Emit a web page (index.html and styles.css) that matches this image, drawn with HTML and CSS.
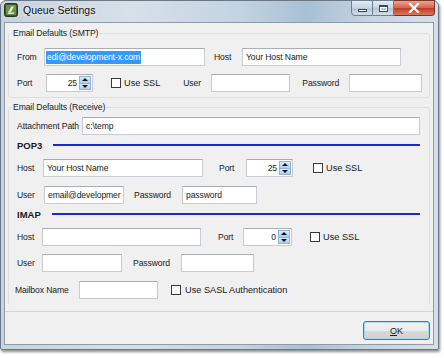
FILE: index.html
```html
<!DOCTYPE html>
<html>
<head>
<meta charset="utf-8">
<link rel="stylesheet" href="styles.css">
</head>
<body>
<div class="window">
  <div class="titlebar">
    <svg class="appicon" width="14" height="14" viewBox="0 0 14 14">
      <rect x="0.5" y="0.5" width="13" height="13" rx="2" fill="#3f5a2c" stroke="#24351a"/>
      <rect x="2" y="2" width="10" height="10" rx="1" fill="#6f8f4a"/>
      <path d="M4 9.5 L7.5 3.5 L10 3.5 L6.5 9.5 Z" fill="#e8f0d8"/>
      <rect x="4" y="9.5" width="6" height="1.3" fill="#e8f0d8"/>
    </svg>
    <span class="title">Queue Settings</span>
    <div class="caption-btns">
      <div class="cbtn min"><span class="minbar"></span></div>
      <div class="cbtn max"><span class="maxbox"></span></div>
      <div class="cbtn close">
        <svg width="12" height="10" viewBox="0 0 12 10"><path d="M2 1 L10 9 M10 1 L2 9" stroke="#fff" stroke-width="2.2" stroke-linecap="square"/></svg>
      </div>
    </div>
  </div>
  <div class="client">
    <fieldset class="group smtp">
      <legend>Email Defaults (SMTP)</legend>
      <div class="row r-from">
        <span class="lbl l-from">From</span>
        <div class="tb w-from"><span class="sel">edi@development-x.com</span></div>
        <span class="lbl l-host">Host</span>
        <div class="tb w-host">Your Host Name</div>
      </div>
      <div class="row r-port">
        <span class="lbl l-port">Port</span>
        <div class="tb spin w-spin"><span class="num">25</span><span class="spinbtns"><span class="up"></span><span class="dn"></span></span></div>
        <span class="chk c-ssl1"><span class="box"></span>Use SSL</span>
        <span class="lbl l-user1">User</span>
        <div class="tb w-user1"></div>
        <span class="lbl l-pw1">Password</span>
        <div class="tb w-pw1"></div>
      </div>
    </fieldset>
    <fieldset class="group recv">
      <legend>Email Defaults (Receive)</legend>
      <div class="row r-att">
        <span class="lbl l-att">Attachment Path</span>
        <div class="tb w-att">c:\temp</div>
      </div>
      <div class="head h-pop">
        <span class="htxt">POP3</span><span class="hline"></span>
      </div>
      <div class="row r-phost">
        <span class="lbl l-phost">Host</span>
        <div class="tb w-phost">Your Host Name</div>
        <span class="lbl l-pport">Port</span>
        <div class="tb spin w-spin"><span class="num">25</span><span class="spinbtns"><span class="up"></span><span class="dn"></span></span></div>
        <span class="chk c-ssl2"><span class="box"></span>Use SSL</span>
      </div>
      <div class="row r-puser">
        <span class="lbl l-puser">User</span>
        <div class="tb w-puser">email@developmer</div>
        <span class="lbl l-ppw">Password</span>
        <div class="tb w-ppw">password</div>
      </div>
      <div class="head h-imap">
        <span class="htxt">IMAP</span><span class="hline"></span>
      </div>
      <div class="row r-ihost">
        <span class="lbl l-ihost">Host</span>
        <div class="tb w-ihost"></div>
        <span class="lbl l-iport">Port</span>
        <div class="tb spin w-spin2"><span class="num">0</span><span class="spinbtns"><span class="up"></span><span class="dn"></span></span></div>
        <span class="chk c-ssl3"><span class="box"></span>Use SSL</span>
      </div>
      <div class="row r-iuser">
        <span class="lbl l-iuser">User</span>
        <div class="tb w-iuser"></div>
        <span class="lbl l-ipw">Password</span>
        <div class="tb w-ipw"></div>
      </div>
      <div class="row r-mbox">
        <span class="lbl l-mbox">Mailbox Name</span>
        <div class="tb w-mbox"></div>
        <span class="chk c-sasl"><span class="box"></span>Use SASL Authentication</span>
      </div>
    </fieldset>
    <div class="footer">
      <button class="ok"><u>O</u>K</button>
    </div>
  </div>
</div>
</body>
</html>
```
FILE: styles.css
```css
* { box-sizing: border-box; }
html, body { margin: 0; padding: 0; background: #ffffff; }
body {
  font-family: "Liberation Sans", Arial, sans-serif;
  font-size: 8.6px;
  letter-spacing: -0.1px;
  color: #1a1a1a;
  width: 444px;
  height: 358px;
  overflow: hidden;
}
.window {
  width: 439px;
  height: 350px;
  border: 1px solid #6b7886;
  border-radius: 6px 6px 2px 2px;
  background: linear-gradient(to right, #c7d3de 0%, #d6e0e9 30%, #c2d3e1 55%, #a8c0d4 70%, #c6d5e2 85%, #d5dfe8 100%);
  box-shadow: 1px 2px 3px rgba(0,0,0,0.45);
  display: flex;
  flex-direction: column;
}
.titlebar {
  height: 21px;
  display: flex;
  align-items: flex-start;
  padding-left: 3px;
}
.appicon { margin-top: 2px; flex: none; }
.title {
  margin-left: 5px;
  margin-top: 3px;
  font-size: 10.5px;
  letter-spacing: 0;
  color: #111;
  text-shadow: 0 0 4px rgba(255,255,255,0.9);
}
.caption-btns {
  margin-left: auto;
  margin-right: 3px;
  display: flex;
  margin-top: -1px;
}
.cbtn {
  height: 16px;
  border: 1px solid #6e7f8f;
  display: flex;
  align-items: center;
  justify-content: center;
}
.cbtn.min {
  width: 22px;
  border-radius: 0 0 0 4px;
  background: linear-gradient(#e3ebf3, #c6d4e2 50%, #b3c6d8 51%, #cfdde9);
}
.cbtn.max {
  width: 21px;
  border-left: none;
  background: linear-gradient(#e3ebf3, #c6d4e2 50%, #b3c6d8 51%, #cfdde9);
}
.cbtn.close {
  width: 41px;
  border-left: none;
  border-radius: 0 0 4px 0;
  background: linear-gradient(#e8a593, #d2624a 50%, #c23a22 51%, #d9775d);
  border-color: #7a3628;
}
.minbar { width: 9px; height: 3px; background: #fff; border: 1px solid #3c4a58; margin-top: 5px; }
.maxbox { width: 9px; height: 7px; border: 1px solid #3c4a58; border-top-width: 2px; background: transparent; box-shadow: inset 0 0 0 1px #fff; }

.client {
  flex: 1;
  margin: 0 4px 4px 3px;
  border: 1px solid #8f9ba8;
  background: #f0f0f0;
  display: flex;
  flex-direction: column;
}

.group {
  margin: 0 3px 0 3px;
  border: 1px solid #dcdfe3;
  border-radius: 3px;
  padding: 0 0 0 8px;
  min-width: 0;
}
.group legend {
  padding: 0 1px;
  margin-left: -5px;
  line-height: 11px;
  color: #1a1a1a;
}
.smtp { margin-top: 5px; padding-top: 9px; padding-bottom: 5px; }
.recv { margin-top: 4px; padding-top: 4px; padding-bottom: 5px; border-bottom-color: transparent; }

.row {
  display: flex;
  align-items: center;
  height: 18px;
}
.lbl { flex: none; white-space: nowrap; }
.tb {
  flex: none;
  height: 18px;
  background: #fff;
  border: 1px solid #c8ccd2;
  border-top-color: #a9adb4;
  padding-left: 3px;
  line-height: 16px;
  white-space: nowrap;
  overflow: hidden;
  color: #1a1a1a;
}
.sel { background: #3399ff; color: #fff; display: inline-block; line-height: 13px; padding: 0 1px; }

.spin { display: flex; align-items: center; justify-content: flex-end; padding: 0 1px 0 0; }
.spin .num { margin-right: 2px; }
.spinbtns { display: flex; flex-direction: column; width: 12px; height: 14px; }
.spinbtns span {
  flex: 1;
  background: linear-gradient(#dcebfa, #a9cdf1);
  border: 1px solid #90b4da;
  position: relative;
}
.spinbtns .dn { border-top: none; }
.spinbtns .up::after, .spinbtns .dn::after {
  content: "";
  position: absolute;
  left: 2px;
  border-left: 3px solid transparent;
  border-right: 3px solid transparent;
}
.spinbtns .up::after { top: 1px; border-bottom: 3px solid #111; }
.spinbtns .dn::after { top: 1px; border-top: 3px solid #111; }

.chk { display: flex; align-items: center; white-space: nowrap; flex: none; font-size: 9.2px; letter-spacing: 0; }
.chk .box {
  width: 10px;
  height: 10px;
  border: 1px solid #3a3a3a;
  background: #fff;
  margin-right: 3px;
}

/* SMTP */
.l-from { width: 27px; }
.w-from { width: 161px; padding-left: 1px; }
.l-host { margin-left: 9px; width: 28px; }
.w-host { width: 159px; }
.r-port { margin-top: 8px; }
.l-port { width: 29px; }
.w-spin { width: 47px; }
.c-ssl1 { margin-left: 18px; }
.l-user1 { margin-left: 23px; width: 28px; }
.w-user1 { width: 79px; }
.l-pw1 { margin-left: 12px; width: 47px; }
.w-pw1 { width: 73px; }

/* Receive */
.l-att { width: 65px; }
.w-att { width: 338px; }
.head { display: flex; align-items: center; height: 12px; margin-top: 4px; }
.htxt { font-weight: bold; font-size: 9.5px; letter-spacing: 0; }
.h-pop .htxt { width: 36px; }
.h-imap .htxt { width: 35px; }
.hline { height: 2px; background: #1a2bd6; flex: none; }
.h-pop .hline { width: 367px; }
.h-imap .hline { width: 368px; }

.r-phost { margin-top: 8px; }
.l-phost { width: 26px; }
.w-phost { width: 160px; }
.l-pport { margin-left: 16px; width: 27px; }
.c-ssl2 { margin-left: 20px; }
.r-puser { margin-top: 9px; }
.l-puser { width: 27px; }
.w-puser { width: 80px; }
.l-ppw { margin-left: 10px; width: 48px; }
.w-ppw { width: 75px; }

.h-imap { margin-top: 4px; }
.r-ihost { margin-top: 8px; }
.l-ihost { width: 25px; }
.w-ihost { width: 159px; }
.l-iport { margin-left: 17px; width: 25px; }
.w-spin2 { width: 49px; }
.c-ssl3 { margin-left: 18px; }
.r-iuser { margin-top: 8px; }
.l-iuser { width: 25px; }
.w-iuser { width: 80px; }
.l-ipw { margin-left: 11px; width: 48px; }
.w-ipw { width: 73px; }
.r-mbox { margin-top: 9px; }
.l-mbox { width: 64px; margin-left: -2px; }
.w-mbox { width: 79px; }
.c-sasl { margin-left: 13px; }
.c-sasl .box { margin-right: 4px; }

.footer {
  margin-top: auto;
  border-top: 1px solid #d5d5d5;
  height: 33px;
  display: flex;
  justify-content: flex-end;
  align-items: flex-start;
  padding: 9px 3px 0 0;
}
.ok {
  width: 67px;
  height: 19px;
  border: 1px solid #3d7bad;
  border-radius: 3px;
  background: linear-gradient(#f4f4f4, #e9e9e9 50%, #dadada 51%, #cfcfcf);
  box-shadow: inset 0 0 0 1px #a9d7f4;
  font-family: "Liberation Sans", Arial, sans-serif;
  font-size: 9px;
  color: #1a1a1a;
  padding: 0;
}
```
